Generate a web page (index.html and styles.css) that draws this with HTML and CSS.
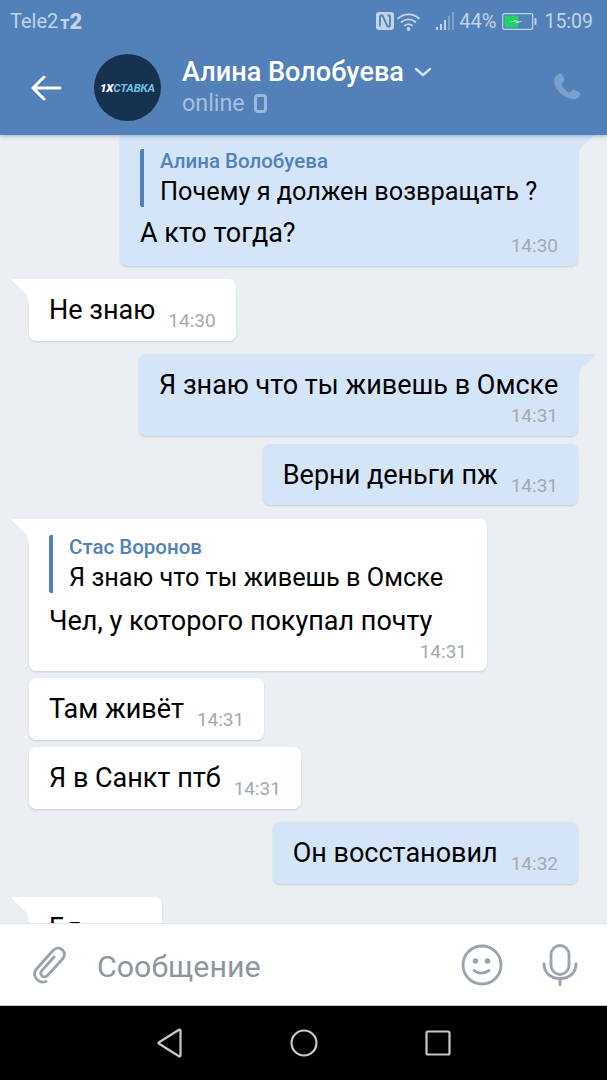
FILE: index.html
```html
<!DOCTYPE html>
<html lang="ru">
<head>
<meta charset="utf-8">
<title>Алина Волобуева</title>
<link rel="stylesheet" href="styles.css">
</head>
<body>
<div class="phone">
  <header class="header">
    <div class="status">
      <div class="carrier"><span>Tele2</span><span class="t2"><span class="t2-t">т</span><span class="t2-2">2</span></span></div>
      <div class="status-right">
        <svg class="nfc" width="20" height="20" viewBox="0 0 20 20"><path d="M4 1h12a3 3 0 0 1 3 3v12a3 3 0 0 1-3 3H4a3 3 0 0 1-3-3V4a3 3 0 0 1 3-3z" fill="#c3d3e7"/><path d="M5 4.500v11M5 4.500h2.500L12.500 15.500H15M15 15.500v-11M12.500 4.500H15" fill="none" stroke="#5181b8" stroke-width="1.800"/></svg>
        <svg class="wifi" width="23" height="19" viewBox="0 0 23 19"><path d="M1 6.500C7 1 16 1 22 6.500M4.500 10C8.500 6.500 14.500 6.500 18.500 10M8 13.500C10 12 13 12 15 13.500" fill="none" stroke="#c3d3e7" stroke-width="1.800" stroke-linecap="round"/><circle cx="11.500" cy="17" r="1.900" fill="#c3d3e7"/></svg>
        <svg class="signal" width="20" height="20" viewBox="0 0 20 20"><rect x="0" y="16" width="2" height="3" fill="#c3d3e7"/><rect x="4" y="13" width="2" height="6" fill="#c3d3e7"/><rect x="8" y="9" width="2" height="10" fill="#c3d3e7"/><rect x="12" y="5" width="2" height="14" fill="#7fa2cc"/><rect x="16" y="1" width="2" height="18" fill="#7fa2cc"/></svg>
        <span class="pct">44%</span>
        <svg class="battery" width="35" height="17" viewBox="0 0 35 17"><rect x="0.700" y="0.700" width="30" height="15.600" rx="2" fill="none" stroke="#c3d3e7" stroke-width="1.200"/><rect x="2.500" y="2.500" width="14" height="12" fill="#1fd36b"/><path d="M8 8.500l7-1.500-1 1.500h7l-7 1.500 1-1.500z" fill="#fff"/><rect x="32.500" y="5" width="2" height="7" rx="1" fill="#c3d3e7"/></svg>
        <span class="clock">15:09</span>
      </div>
    </div>
    <div class="bar">
      <svg class="back" width="32" height="28" viewBox="0 0 32 28"><path d="M30 14H3M14 3L3 14l11 11" fill="none" stroke="#fff" stroke-width="3" stroke-linecap="round" stroke-linejoin="round"/></svg>
      <div class="avatar"><span class="logo-w">1X</span><span class="logo-b">СТАВКА</span></div>
      <div class="who">
        <div class="name-row"><span class="name">Алина Волобуева</span>
          <svg width="18" height="10" viewBox="0 0 18 10"><path d="M2 2l7 6 7-6" fill="none" stroke="#d7e2f0" stroke-width="2.400" stroke-linecap="round" stroke-linejoin="round"/></svg>
        </div>
        <div class="online-row"><span class="online">online</span>
          <svg width="13" height="19" viewBox="0 0 13 19"><rect x="1.500" y="1.500" width="10" height="16" rx="2.500" fill="#5181b8" stroke="#9db8d8" stroke-width="3"/></svg>
        </div>
      </div>
      <svg class="phone-ic" width="34" height="34" viewBox="0 0 30 30"><path d="M8 2.500c1-.6 2-.3 2.600.7l2 4c.4.900.2 1.700-.5 2.300l-1.500 1.300c-.5.400-.5 1-.2 1.600 1.300 2.600 3.400 5 6.200 6.500.6.300 1.100.2 1.500-.3l1.400-1.500c.7-.7 1.500-.8 2.400-.4l3.800 2c1 .6 1.300 1.500.8 2.600-1.100 2.700-3.700 4-6.500 3.500C11 23.500 4 15.500 3.500 9.500 3.300 6.500 5 3.800 8 2.500z" fill="#7ba0cc"/></svg>
    </div>
  </header>

  <main class="chat">
    <div class="bubble out first stack tailed">
      <svg class="tail tail-out" width="18" height="24" viewBox="0 0 18 24"><path d="M0 0H16C17 0 17.500 1 17 1.500L3 15C1 17 1 20 1 24H0Z" fill="#d5e5f8"/></svg>
      <div class="reply"><div class="reply-name">Алина Волобуева</div><div class="reply-text">Почему я должен возвращать ?</div></div>
      <div class="split"><span class="text">А кто тогда?</span><span class="time">14:30</span></div>
    </div>
    <div class="bubble in tailed gap-big">
      <svg class="tail tail-in" width="18" height="24" viewBox="0 0 18 24"><path d="M18 0H2C1 0 .5 1 1 1.500L15 15C17 17 17 20 17 24H18Z" fill="#fff"/></svg>
      <span class="text">Не знаю</span><span class="time">14:30</span>
    </div>
    <div class="bubble out tailed gap-big stack tall">
      <svg class="tail tail-out" width="18" height="24" viewBox="0 0 18 24"><path d="M0 0H16C17 0 17.500 1 17 1.500L3 15C1 17 1 20 1 24H0Z" fill="#d5e5f8"/></svg>
      <span class="text">Я знаю что ты живешь в Омске</span><span class="time">14:31</span>
    </div>
    <div class="bubble out gap-small"><span class="text">Верни деньги пж</span><span class="time">14:31</span></div>
    <div class="bubble in tailed gap-big stack wide">
      <svg class="tail tail-in" width="18" height="24" viewBox="0 0 18 24"><path d="M18 0H2C1 0 .5 1 1 1.500L15 15C17 17 17 20 17 24H18Z" fill="#fff"/></svg>
      <div class="reply"><div class="reply-name">Стас Воронов</div><div class="reply-text">Я знаю что ты живешь в Омске</div></div>
      <span class="text">Чел, у которого покупал почту</span><span class="time">14:31</span>
    </div>
    <div class="bubble in gap-small"><span class="text">Там живёт</span><span class="time">14:31</span></div>
    <div class="bubble in gap-small"><span class="text">Я в Санкт птб</span><span class="time">14:31</span></div>
    <div class="bubble out gap-big"><span class="text">Он восстановил</span><span class="time">14:32</span></div>
    <div class="bubble in tailed gap-big last">
      <svg class="tail tail-in" width="18" height="24" viewBox="0 0 18 24"><path d="M18 0H2C1 0 .5 1 1 1.500L15 15C17 17 17 20 17 24H18Z" fill="#fff"/></svg>
      <span class="text">Бл</span>
    </div>
  </main>

  <footer class="composer">
    <svg class="clip" width="36" height="40" viewBox="0 0 36 40"><path d="M15 36.500c-2.500 1-6 .8-8.500-1.500C3 32 2.500 27.500 5.500 24L22 5.500c3-3 7-3 9.500-.5s2.500 6 0 9L16.500 30.500c-1.500 1.700-4 1.800-5.500.4s-1.500-3.700 0-5.500L23 12" fill="none" stroke="#9aa4af" stroke-width="2.800" stroke-linecap="round" stroke-linejoin="round"/></svg>
    <span class="placeholder">Сообщение</span>
    <svg class="smile" width="42" height="42" viewBox="0 0 42 42"><circle cx="21" cy="21" r="19" fill="none" stroke="#9aa4af" stroke-width="2.800"/><circle cx="14.500" cy="17" r="2.800" fill="#9aa4af"/><circle cx="26.500" cy="17" r="2.800" fill="#9aa4af"/><path d="M13 26.500c4 3.500 10 3.500 15 0" fill="none" stroke="#9aa4af" stroke-width="2.800" stroke-linecap="round"/></svg>
    <svg class="mic" width="36" height="42" viewBox="0 0 36 42"><rect x="9" y="1.500" width="18" height="29" rx="9" fill="none" stroke="#9aa4af" stroke-width="2.800"/><path d="M2 20c0 9 7 14.500 16 14.500S34 29 34 20" fill="none" stroke="#9aa4af" stroke-width="2.800" stroke-linecap="round"/><path d="M18 35v5.500" fill="none" stroke="#9aa4af" stroke-width="3" stroke-linecap="round"/></svg>
  </footer>

  <nav class="nav">
    <svg width="26" height="30" viewBox="0 0 26 30"><path d="M23.500 2.500v25a1 1 0 0 1-1.500.8L2.500 16a1 1 0 0 1 0-2L22 1.700a1 1 0 0 1 1.500.8z" fill="none" stroke="#c9c9c9" stroke-width="2.200" stroke-linejoin="round"/></svg>
    <svg width="28" height="28" viewBox="0 0 28 28"><circle cx="14" cy="14" r="12.500" fill="none" stroke="#c9c9c9" stroke-width="2.200"/></svg>
    <svg width="26" height="26" viewBox="0 0 26 26"><rect x="1.500" y="1.500" width="23" height="23" rx="1.500" fill="none" stroke="#c9c9c9" stroke-width="2.200"/></svg>
  </nav>
</div>
</body>
</html>
```
FILE: styles.css
```css
* { box-sizing: border-box; }
html, body { margin: 0; padding: 0; }
body { font-family: Roboto, "Noto Sans", sans-serif; background: #000; }
.phone { width: 607px; height: 1080px; display: flex; flex-direction: column; overflow: hidden; }

.header { height: 135px; flex: none; background: #5181b8; position: relative; z-index: 2; box-shadow: 0 1px 4px rgba(40, 70, 110, .35); }
.status { height: 42px; display: flex; align-items: center; justify-content: space-between; padding: 0 14px 0 10px; color: #c3d3e7; }
.carrier { display: flex; align-items: center; font-size: 20px; gap: 2px; }
.t2 { display: inline-flex; align-items: baseline; font-weight: 700; }
.t2-t { font-size: 18px; }
.t2-2 { font-size: 22px; font-weight: 900; }
.status-right { display: flex; align-items: center; }
.nfc { margin-right: 2px; }
.wifi { margin-right: 16px; }
.signal { margin-right: 3px; }
.pct { font-size: 20px; margin-right: 6px; }
.battery { margin-right: 7px; }
.clock { font-size: 19.500px; }

.bar { height: 93px; display: flex; align-items: flex-start; padding: 12px 23px 0 30px; }
.back { margin: 20px 0 0 0; flex: none; }
.avatar { width: 67px; height: 67px; flex: none; margin-left: 32px; border-radius: 50%; background: #17324f; display: flex; align-items: center; justify-content: center; font-size: 11.500px; font-style: italic; font-weight: 700; letter-spacing: -.2px; }
.logo-w { color: #fff; font-weight: 900; }
.logo-b { color: #6fc3e6; }
.who { margin-left: 21px; flex: 1; }
.name-row { display: flex; align-items: center; gap: 10px; height: 36px; }
.name { font-size: 27.100px; font-weight: 500; color: #fff; }
.online-row { display: flex; align-items: center; gap: 9px; height: 28px; margin-top: -1px; }
.online { font-size: 23.300px; color: #a7c0de; }
.phone-ic { margin-top: 17px; flex: none; }

.chat { flex: 1; min-height: 0; overflow: hidden; background: #ebeff4; display: flex; flex-direction: column; align-items: flex-start; padding: 0 29px; }
.bubble { position: relative; flex: none; display: flex; align-items: flex-start; gap: 13px; padding: 16px 20px 9px; border-radius: 7px; box-shadow: 0 1px 2px rgba(60, 90, 130, .22); height: 61.500px; }
.bubble.in { background: #fff; align-self: flex-start; }
.bubble.out { background: #d5e5f8; align-self: flex-end; }
.bubble.tailed.in { border-top-left-radius: 0; }
.bubble.tailed.out { border-top-right-radius: 0; }
.gap-big { margin-top: 13.500px; }
.gap-small { margin-top: 7.500px; }
.first { margin-top: -2px; width: 458px; height: 132.500px; }
.first .time { margin-top: 18px; }
.stack { flex-direction: column; align-items: stretch; gap: 0; }
.stack > .time { align-self: flex-end; margin-top: 6px; }
.tall { height: 82px; width: 439px; }
.wide { width: 458px; height: 152px; }
.last { width: 133px; height: 80px; }
.tail { position: absolute; top: 0; }
.tail-out { left: 100%; }
.tail-in { right: 100%; }
.text { font-size: 27px; line-height: 30px; color: #000; white-space: nowrap; }
.time { font-size: 19px; line-height: 20px; color: #a3a9b0; white-space: nowrap; margin-top: 16px; }
.reply { border-left: 4px solid #5181b8; border-radius: 2px; padding-left: 16px; margin-bottom: 11px; }
.wide .reply { margin-bottom: 13px; }
.reply-name { font-size: 20.500px; font-weight: 500; line-height: 24px; color: #5181b8; white-space: nowrap; }
.reply-text { font-size: 25.300px; line-height: 38px; margin-bottom: -4px; color: #000; white-space: nowrap; }
.split { display: flex; justify-content: space-between; align-items: flex-start; }

.composer { height: 81px; flex: none; background: #fff; display: flex; align-items: center; padding: 0 29px 0 31px; position: relative; box-shadow: 0 -1px 0 #e3e6ea; }
.clip { flex: none; }
.placeholder { flex: 1; margin: 4px 0 0 30px; font-size: 30.400px; color: #8c96a1; }
.smile { flex: none; margin-right: 39px; }
.mic { flex: none; }

.nav { height: 75px; flex: none; background: #000; display: flex; align-items: center; justify-content: center; gap: 107px; border-top: 1px solid #c9c9c9; }
```
